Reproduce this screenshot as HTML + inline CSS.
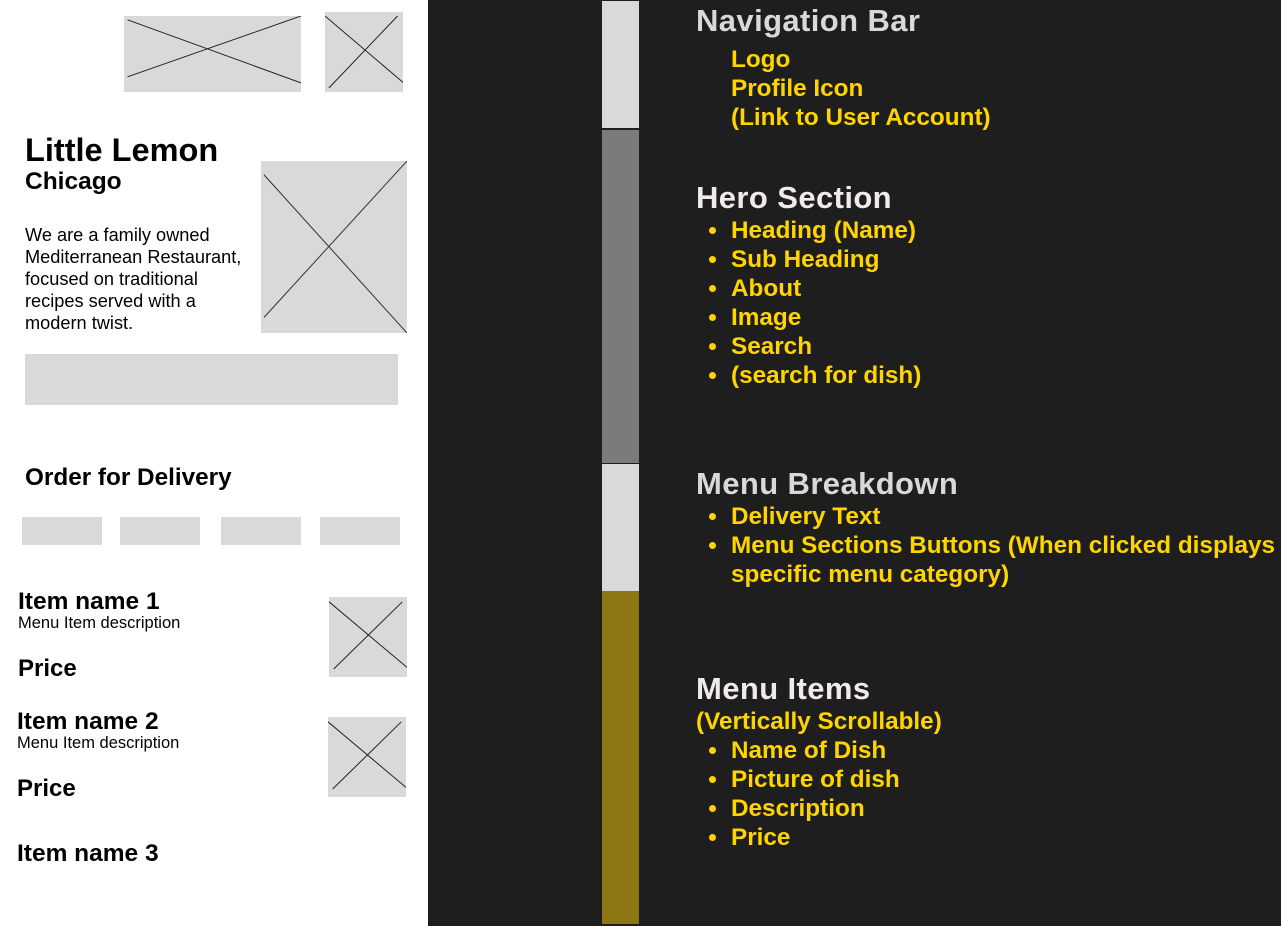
<!DOCTYPE html>
<html><head><meta charset="utf-8"><style>
*{margin:0;padding:0;box-sizing:border-box}
body{width:1281px;height:926px;background:#1e1e1e;position:relative;overflow:hidden;font-family:"Liberation Sans",sans-serif}
.l{position:absolute;left:0;top:0;width:428px;height:926px;background:#fff}
.t{position:absolute;white-space:nowrap}
.b{font-weight:bold}
.ph{position:absolute;background:#d9d9d9}
.ph svg{position:absolute;left:0;top:0;width:100%;height:100%}
.y{color:#ffd400;font-weight:bold;font-size:24.3px;line-height:29px;height:29px}
.h{color:#d9d9d9;font-weight:bold;font-size:31px;line-height:36px;letter-spacing:0.4px}
.dot{position:absolute;width:7px;height:7px;border-radius:50%;background:#ffd400}
.seg{position:absolute;left:602px;width:37px}
</style></head><body>
<div class="l"></div>
<div class="ph" style="left:124px;top:16px;width:177px;height:76px"><svg viewBox="0 0 100 100" preserveAspectRatio="none"><line x1="2" y1="5" x2="100" y2="88" stroke="#222" stroke-width="1" vector-effect="non-scaling-stroke"/><line x1="2" y1="80" x2="100" y2="0" stroke="#222" stroke-width="1" vector-effect="non-scaling-stroke"/></svg></div>
<div class="ph" style="left:325px;top:12px;width:78px;height:80px"><svg viewBox="0 0 100 100" preserveAspectRatio="none"><line x1="0" y1="5" x2="100" y2="88" stroke="#222" vector-effect="non-scaling-stroke"/><line x1="5" y1="95" x2="93" y2="5" stroke="#222" vector-effect="non-scaling-stroke"/></svg></div>
<div class="ph" style="left:261px;top:161px;width:146px;height:172px"><svg viewBox="0 0 100 100" preserveAspectRatio="none"><line x1="2" y1="8" x2="100" y2="100" stroke="#333" vector-effect="non-scaling-stroke"/><line x1="2" y1="91" x2="100" y2="0" stroke="#333" vector-effect="non-scaling-stroke"/></svg></div>
<div class="ph" style="left:25px;top:354px;width:373px;height:51px"></div>
<div class="ph" style="left:22px;top:517px;width:80px;height:28px"></div>
<div class="ph" style="left:120px;top:517px;width:80px;height:28px"></div>
<div class="ph" style="left:221px;top:517px;width:80px;height:28px"></div>
<div class="ph" style="left:320px;top:517px;width:80px;height:28px"></div>
<div class="ph" style="left:329px;top:597px;width:78px;height:80px"><svg viewBox="0 0 100 100" preserveAspectRatio="none"><line x1="0" y1="6" x2="100" y2="88" stroke="#222" vector-effect="non-scaling-stroke"/><line x1="6" y1="90" x2="94" y2="6" stroke="#222" vector-effect="non-scaling-stroke"/></svg></div>
<div class="ph" style="left:328px;top:717px;width:78px;height:80px"><svg viewBox="0 0 100 100" preserveAspectRatio="none"><line x1="0" y1="6" x2="100" y2="88" stroke="#222" vector-effect="non-scaling-stroke"/><line x1="6" y1="90" x2="94" y2="6" stroke="#222" vector-effect="non-scaling-stroke"/></svg></div>

<div class="t b" style="left:25px;top:130px;font-size:32.5px;line-height:40px">Little Lemon</div>
<div class="t b" style="left:25px;top:167px;font-size:24.5px;line-height:30px">Chicago</div>
<div class="t" style="left:25px;top:224px;font-size:18.2px;line-height:22px">We are a family owned<br>Mediterranean Restaurant,<br>focused on traditional<br>recipes served with a<br>modern twist.</div>
<div class="t b" style="left:25px;top:463px;font-size:24.3px;line-height:30px">Order for Delivery</div>
<div class="t b" style="left:18px;top:587px;font-size:24.5px;line-height:30px">Item name 1</div>
<div class="t" style="left:18px;top:613px;font-size:16.5px;line-height:20px">Menu Item description</div>
<div class="t b" style="left:18px;top:654px;font-size:24px;line-height:30px">Price</div>
<div class="t b" style="left:17px;top:707px;font-size:24.5px;line-height:30px">Item name 2</div>
<div class="t" style="left:17px;top:733px;font-size:16.5px;line-height:20px">Menu Item description</div>
<div class="t b" style="left:17px;top:774px;font-size:24px;line-height:30px">Price</div>
<div class="t b" style="left:17px;top:839px;font-size:24.5px;line-height:30px">Item name 3</div>

<div class="seg" style="top:1px;height:127px;background:#d9d9d9"></div>
<div class="seg" style="top:130px;height:333px;background:#7b7b7b"></div>
<div class="seg" style="top:464px;height:127px;background:#d9d9d9"></div>
<div class="seg" style="top:591px;height:333px;background:#8c7712"></div>

<div class="t h" style="left:696px;top:3px">Navigation Bar</div>
<div class="t y" style="left:731px;top:45px">Logo</div>
<div class="t y" style="left:731px;top:74px">Profile Icon</div>
<div class="t y" style="left:731px;top:103px">(Link to User Account)</div>

<div class="t h" style="left:696px;top:180px;color:#f0eaea">Hero Section</div>
<div class="t y" style="left:731px;top:216px">Heading (Name)</div>
<div class="t y" style="left:731px;top:245px">Sub Heading</div>
<div class="t y" style="left:731px;top:274px">About</div>
<div class="t y" style="left:731px;top:303px">Image</div>
<div class="t y" style="left:731px;top:332px">Search</div>
<div class="t y" style="left:731px;top:361px">(search for dish)</div>
<div class="dot" style="left:709px;top:227px"></div>
<div class="dot" style="left:709px;top:256px"></div>
<div class="dot" style="left:709px;top:285px"></div>
<div class="dot" style="left:709px;top:314px"></div>
<div class="dot" style="left:709px;top:343px"></div>
<div class="dot" style="left:709px;top:372px"></div>

<div class="t h" style="left:696px;top:466px">Menu Breakdown</div>
<div class="t y" style="left:731px;top:502px">Delivery Text</div>
<div class="t y" style="left:731px;top:531px">Menu Sections Buttons (When clicked displays</div>
<div class="t y" style="left:731px;top:560px">specific menu category)</div>
<div class="dot" style="left:709px;top:513px"></div>
<div class="dot" style="left:709px;top:542px"></div>

<div class="t h" style="left:696px;top:671px;color:#f0eaea">Menu Items</div>
<div class="t y" style="left:696px;top:707px">(Vertically Scrollable)</div>
<div class="t y" style="left:731px;top:736px">Name of Dish</div>
<div class="t y" style="left:731px;top:765px">Picture of dish</div>
<div class="t y" style="left:731px;top:794px">Description</div>
<div class="t y" style="left:731px;top:823px">Price</div>
<div class="dot" style="left:709px;top:747px"></div>
<div class="dot" style="left:709px;top:776px"></div>
<div class="dot" style="left:709px;top:805px"></div>
<div class="dot" style="left:709px;top:834px"></div>
</body></html>
